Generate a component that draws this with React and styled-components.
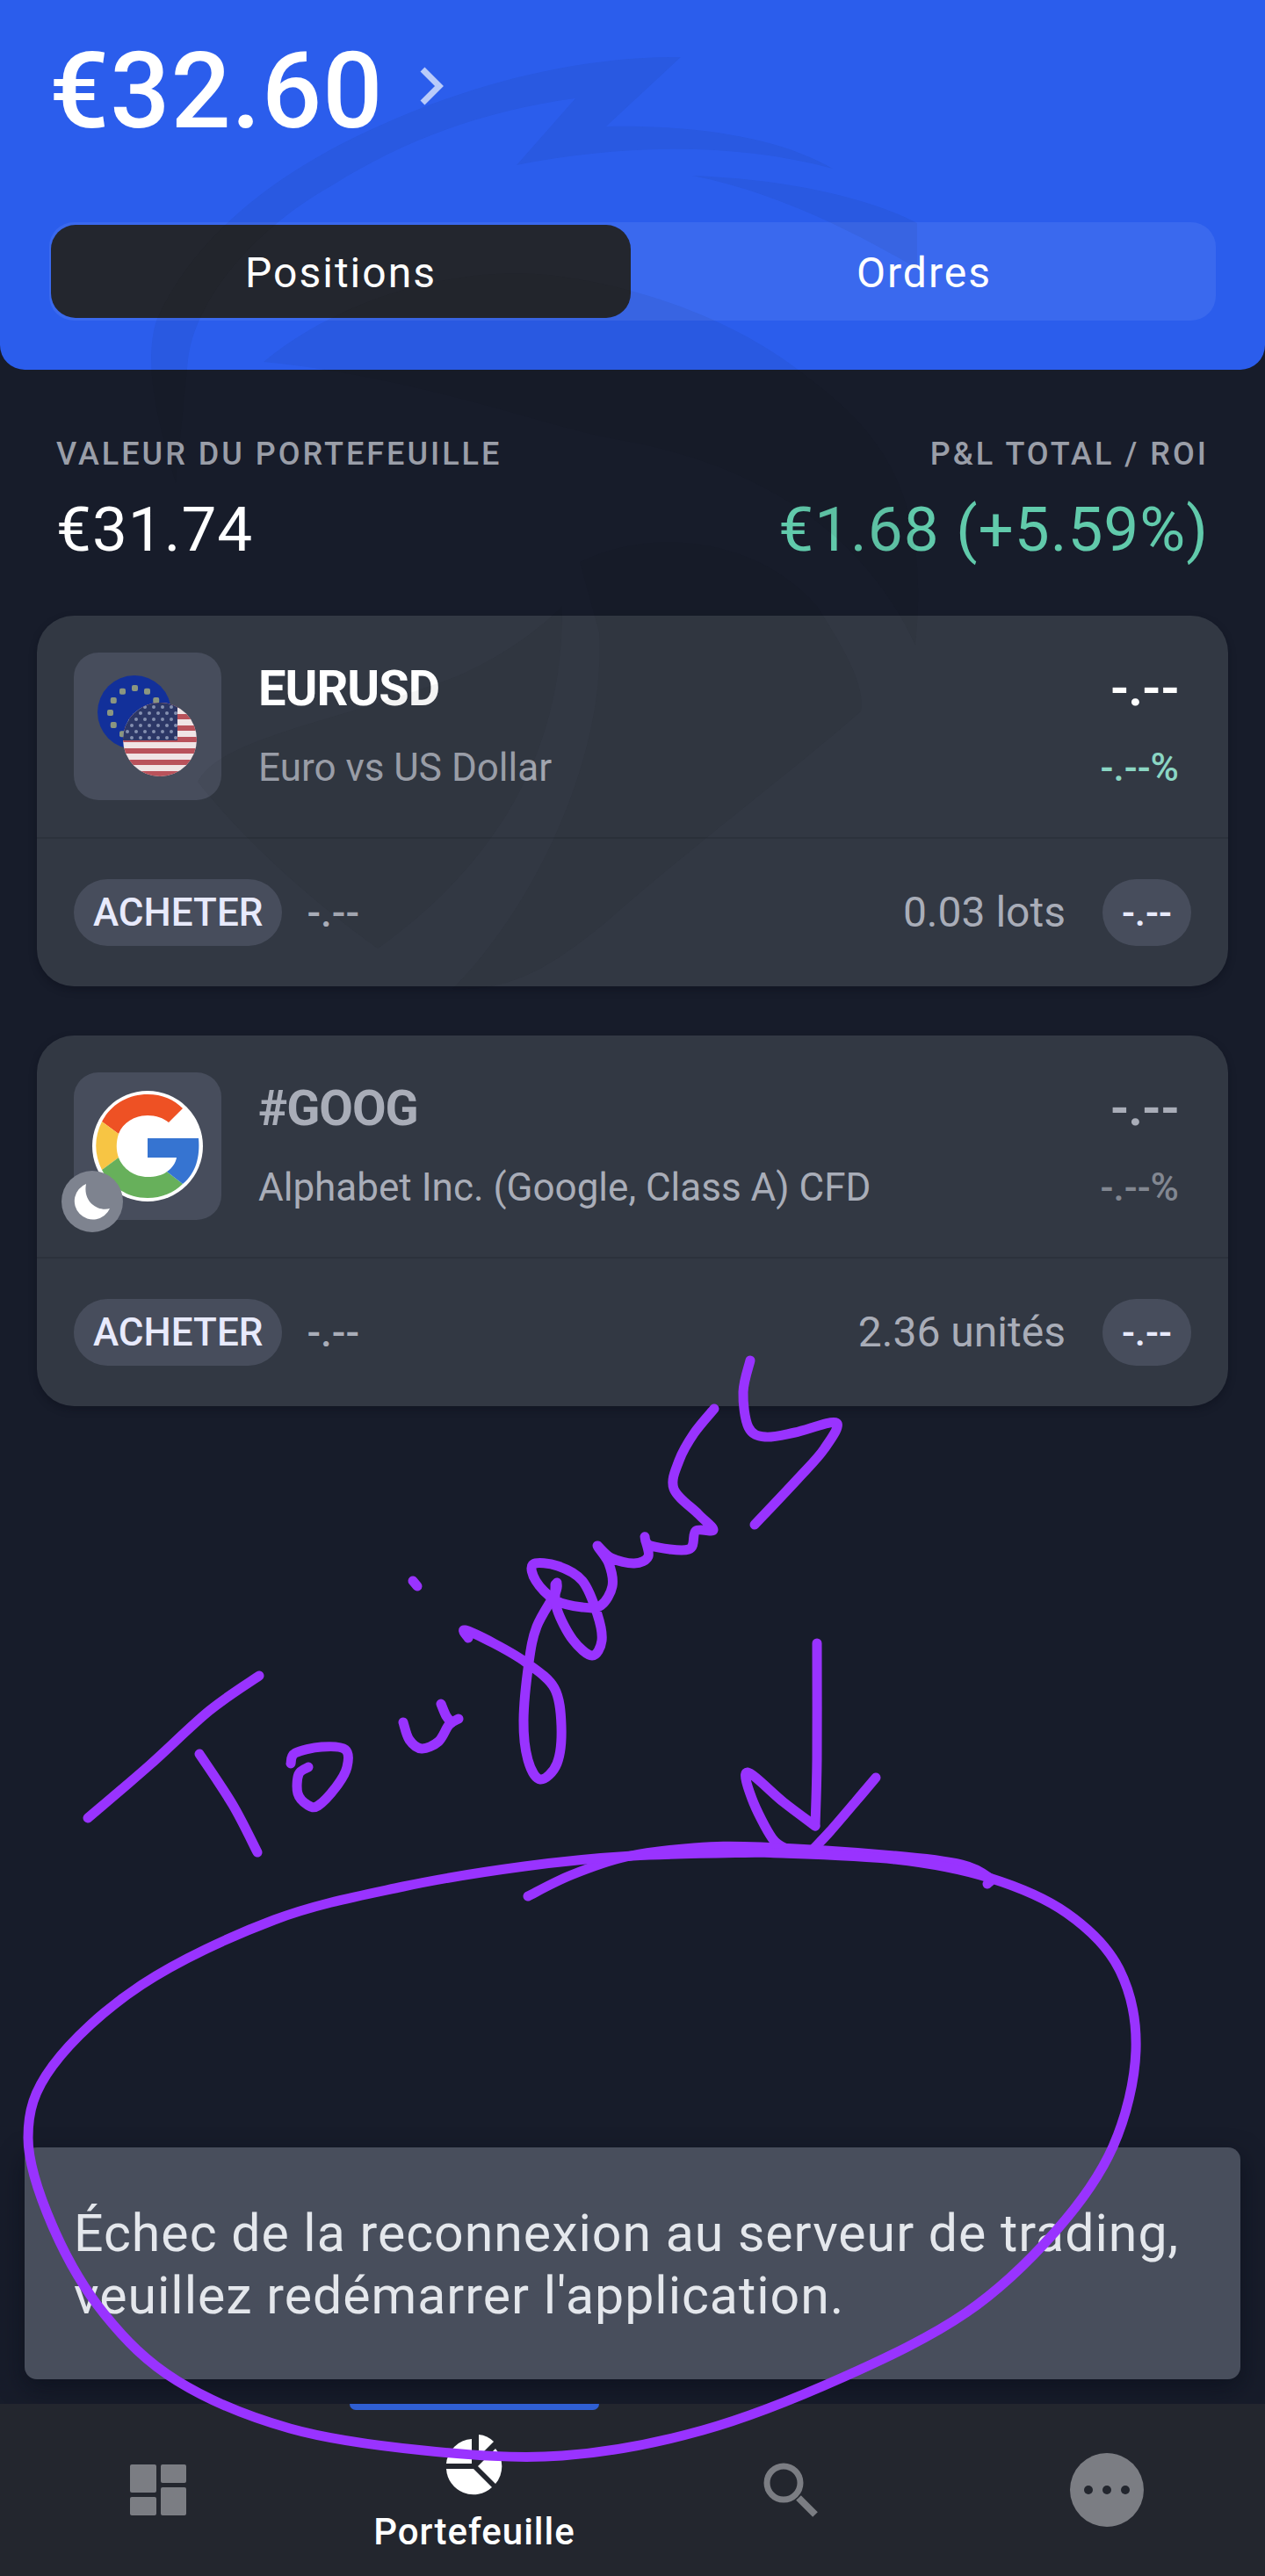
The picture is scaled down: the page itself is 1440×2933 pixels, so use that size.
import React, { useState } from "react";
import styled, { createGlobalStyle } from "styled-components";

const GlobalStyle = createGlobalStyle`
  *, *::before, *::after { box-sizing: border-box; }
  html, body { margin: 0; padding: 0; background: #171c2a; }
  body { font-family: Roboto, "Liberation Sans", sans-serif; color: #fff; }
  button { font: inherit; color: inherit; background: none; border: 0; padding: 0; cursor: pointer; }
  a { color: inherit; text-decoration: none; }
  h1, h2, p, dl, dt, dd, ul { margin: 0; padding: 0; }
`;

const Page = styled.div`
  position: relative;
  display: flex;
  flex-direction: column;
  min-height: 100vh;
  background: #171c2a;
`;

const Header = styled.header`
  padding: 34px 56px 56px;
  border-radius: 0 0 28px 28px;
  background: #2b5dec;
`;

const Balance = styled.button`
  display: flex;
  align-items: center;
  gap: 42px;
  font-size: 120px;
  font-weight: 500;
  line-height: 140px;
  letter-spacing: 1px;
`;

const Chevron = styled.svg`
  width: 28px;
  height: 44px;
  margin-bottom: 12px;
`;

const Tabs = styled.div`
  display: grid;
  grid-template-columns: 1fr 1fr;
  gap: 4px;
  margin-top: 79px;
  padding: 3px 2px;
  border-radius: 28px;
  background: #3a69ee;
`;

const Tab = styled.button`
  height: 106px;
  && { padding-top: 4px; }
  border-radius: 28px;
  font-size: 48px;
  line-height: 56px;
  letter-spacing: 2px;
  background: ${(p) => (p.$active ? "#23262e" : "transparent")};
`;

const Main = styled.main`
  flex: 1;
`;

const Summary = styled.dl`
  display: flex;
  justify-content: space-between;
  && { padding: 74px 64px 56px; }
`;

const SummaryItem = styled.div`
  text-align: ${(p) => (p.$end ? "right" : "left")};
`;

const SummaryLabel = styled.dt`
  font-size: 36px;
  font-weight: 500;
  line-height: 44px;
  letter-spacing: 3px;
  color: #9a9ea8;
`;

const SummaryValue = styled.dd`
  && { margin-top: 22px; }
  font-size: 71px;
  line-height: 84px;
  letter-spacing: 1px;
  color: ${(p) => (p.$gain ? "#61caab" : "#fff")};
`;

const Positions = styled.ul`
  display: flex;
  flex-direction: column;
  gap: 56px;
  && { padding: 0 42px; }
  list-style: none;
`;

const Card = styled.li`
  border-radius: 42px;
  background: #323843;
  box-shadow: 0 4px 8px rgba(8, 12, 24, 0.35);
`;

const CardTop = styled.div`
  display: flex;
  gap: 42px;
  padding: 42px 56px 42px 42px;
  border-bottom: 2px solid #2c323c;
`;

const Tile = styled.div`
  position: relative;
  display: grid;
  place-items: center;
  width: 168px;
  height: 168px;
  border-radius: 28px;
  background: #474d5c;
`;

const MoonBadge = styled.span`
  position: absolute;
  left: -14px;
  bottom: -14px;
  width: 70px;
  height: 70px;
`;

const Instrument = styled.div`
  flex-grow: ${(p) => (p.$end ? 0 : 1)};
  display: flex;
  flex-direction: column;
  gap: 32px;
  padding-top: 9px;
  text-align: ${(p) => (p.$end ? "right" : "left")};
  white-space: nowrap;
`;

const Symbol = styled.h2`
  font-size: 56px;
  font-weight: 700;
  line-height: 64px;
  letter-spacing: -1px;
  color: ${(p) => (p.$muted ? "#a9adb8" : "#fff")};
`;

const Quote = styled.p`
  font-size: 56px;
  font-weight: 700;
  line-height: 64px;
  letter-spacing: -1px;
  color: ${(p) => (p.$muted ? "#a9adb8" : "#fff")};
`;

const Description = styled.p`
  font-size: 44px;
  line-height: 52px;
  color: ${(p) => (p.$muted ? "#a9adb8" : "#a1a5af")};
`;

const Change = styled.p`
  font-size: 44px;
  line-height: 52px;
  font-weight: 500;
  color: ${(p) => (p.$muted ? "#828791" : "#8bd6c3")};
`;

const CardBottom = styled.div`
  display: flex;
  align-items: center;
  height: 168px;
  padding: 0 42px;
  color: #a9adb8;
`;

const Pill = styled.span`
  padding: 0 22px;
  border-radius: 38px;
  background: #474d5c;
  color: #e8eafc;
  font-size: 44px;
  font-weight: 500;
  line-height: 76px;
`;

const OpenPrice = styled.span`
  margin-left: 28px;
  font-size: 46px;
  line-height: 56px;
  font-weight: 500;
`;

const Volume = styled.span`
  margin: 0 42px 0 auto;
  font-size: 48px;
  line-height: 56px;
`;

const Snackbar = styled.p`
  && { margin: 28px; padding: 62px 56px 60px; }
  border-radius: 14px;
  background: #484e5c;
  box-shadow: 0 10px 28px rgba(6, 10, 22, 0.5);
  color: #e4e7ec;
  font-size: 59px;
  line-height: 71px;
  letter-spacing: 1px;
`;

const Nav = styled.nav`
  display: grid;
  grid-template-columns: repeat(4, 1fr);
  height: 196px;
  background: #23262e;
`;

const NavItem = styled.a`
  position: relative;
  display: flex;
  flex-direction: column;
  align-items: center;
  justify-content: center;
  gap: 16px;
  padding-top: ${(p) => (p.$active ? 10 : 0)}px;
  color: ${(p) => (p.$active ? "#fff" : "#7b7d83")};
  font-size: 42px;
  font-weight: 500;
  line-height: 52px;
  letter-spacing: 1px;

  &::before {
    content: "";
    position: absolute;
    top: 0;
    width: 284px;
    height: 7px;
    border-radius: 0 0 8px 8px;
    background: ${(p) => (p.$active ? "#2f5fd3" : "transparent")};
  }
`;

const Overlay = styled.svg`
  position: absolute;
  top: 0;
  left: 0;
  width: 100%;
  height: auto;
  pointer-events: none;
`;

/* Turns a list of points into a smooth curve (Catmull-Rom). */
function smooth(points) {
  let d = `M${points[0][0]} ${points[0][1]}`;
  for (let i = 0; i < points.length - 1; i++) {
    const a = points[i - 1] || points[i];
    const b = points[i];
    const c = points[i + 1];
    const e = points[i + 2] || c;
    d += `C${b[0] + (c[0] - a[0]) / 6} ${b[1] + (c[1] - a[1]) / 6} ${c[0] - (e[0] - b[0]) / 6} ${c[1] - (e[1] - b[1]) / 6} ${c[0]} ${c[1]}`;
  }
  return d;
}

const inkStrokes = [
  [[100, 2070], [170, 2010], [238, 1948], [295, 1908]],
  [[227, 1997], [265, 2055], [293, 2109]],
  [[351, 2012], [340, 2020], [339, 2042], [350, 2055], [362, 2056], [383, 2034], [395, 2012], [393, 1992], [366, 1989], [336, 1996], [331, 2008]],
  [[459, 1961], [466, 1981], [480, 1991], [499, 1983], [511, 1964], [522, 1957]],
  [[502, 1940], [508, 1954], [514, 1961]],
  [[470, 1800], [475, 1806]],
  [[533, 1865], [529, 1856], [562, 1871], [599, 1893], [631, 1922], [639, 1965], [634, 2008], [615, 2026], [601, 2004], [596, 1959], [602, 1893], [611, 1852], [632, 1814], [634, 1802]],
  [[632, 1804], [634, 1832], [652, 1867], [674, 1885], [685, 1868], [680, 1838], [663, 1800], [635, 1783], [607, 1781], [610, 1800], [632, 1822], [663, 1830], [684, 1828], [697, 1806], [693, 1780], [680, 1760], [696, 1774], [722, 1780], [738, 1772], [734, 1750], [741, 1760], [784, 1764], [792, 1743], [812, 1742], [795, 1724], [767, 1695], [773, 1663], [790, 1632], [813, 1604]],
  [[854, 1549], [846, 1585], [852, 1625], [871, 1636], [905, 1631], [952, 1620], [938, 1650], [908, 1684], [859, 1736]],
  [[930, 1871], [930, 2003], [928, 2079]],
  [[928, 2079], [892, 2052], [851, 2018], [856, 2048], [879, 2093], [897, 2106]],
  [[927, 2104], [945, 2085], [975, 2050], [997, 2024]],
  [[601, 2159], [650, 2135], [713, 2114], [790, 2104], [866, 2103], [1019, 2113], [1095, 2123], [1126, 2138], [1124, 2145]],
  [[866, 2109], [1019, 2117], [1126, 2138], [1214, 2178], [1274, 2242], [1293, 2335], [1267, 2444], [1202, 2540], [1100, 2633], [959, 2707], [800, 2767], [640, 2796], [482, 2790], [330, 2765], [202, 2711], [119, 2635], [60, 2535], [32, 2434], [60, 2352], [161, 2260], [312, 2186], [459, 2148], [597, 2125], [720, 2113], [866, 2109]],
];

function Watermark() {
  return (
    <Overlay viewBox="0 0 1440 1140" aria-hidden="true">
      <g fill="#10151c" fillOpacity="0.05">
        <path d="M775 65C660 64 540 94 430 144C300 202 215 280 178 365C164 410 176 470 200 550L214 410C222 340 290 260 380 210C460 160 550 126 655 112L588 188C700 166 830 160 948 192C890 158 800 142 690 144Z" />
        <path d="M788 200C900 204 990 226 1044 254V306C970 262 880 218 788 200Z" />
        <path d="M300 412C400 330 540 300 640 315C760 332 860 380 920 430C1000 490 1060 560 1042 735C990 620 880 530 700 500C620 486 480 430 300 412Z" />
        <path d="M225 890C250 840 390 820 520 770C570 748 610 720 640 690C642 850 570 980 430 1080C360 1030 280 960 225 890Z" />
        <path d="M660 640C740 600 860 610 930 690C962 740 985 780 980 810C900 880 780 970 690 1050C640 1090 590 1130 515 1126C610 1030 690 860 682 720Z" />
      </g>
    </Overlay>
  );
}

function Annotation() {
  return (
    <Overlay viewBox="0 0 1440 2933" aria-hidden="true">
      <g fill="none" stroke="#9933ff" strokeWidth="11" strokeLinecap="round" strokeLinejoin="round">
        {inkStrokes.map((points, i) => (
          <path key={i} d={smooth(points)} />
        ))}
      </g>
    </Overlay>
  );
}

function FlagPair() {
  const euStars = Array.from({ length: 12 }, (_, i) => {
    const t = (i * Math.PI) / 6;
    return [42 + 28 * Math.sin(t), 42 - 28 * Math.cos(t)];
  });
  const usStars = [];
  for (let r = 0; r < 6; r++) {
    for (let c = 0; c < 6; c++) usStars.push([34 + c * 10 + (r % 2) * 5, 36 + r * 7]);
  }
  return (
    <svg width="114" height="116" viewBox="0 0 114 116" aria-hidden="true">
      <defs>
        <clipPath id="usDisc"><circle cx="71" cy="73" r="42" /></clipPath>
      </defs>
      <circle cx="42" cy="42" r="42" fill="#12309a" />
      {euStars.map(([x, y], i) => (
        <rect key={i} x={x - 3} y={y - 3} width="7" height="7" rx="2" fill="#8b9680" />
      ))}
      <g clipPath="url(#usDisc)">
        <rect x="28" y="30" width="88" height="88" fill="#f0e4e5" />
        {[0, 1, 2, 3, 4, 5, 6].map((i) => (
          <rect key={i} x="28" y={31 + i * 13} width="88" height="6" fill="#b9525b" />
        ))}
        <rect x="28" y="30" width="63" height="44" fill="#2c3766" />
        {usStars.map(([x, y], i) => (
          <circle key={i} cx={x} cy={y} r="2" fill="#8590b0" />
        ))}
      </g>
    </svg>
  );
}

function GoogleLogo() {
  return (
    <svg width="126" height="126" viewBox="0 0 126 126" aria-hidden="true">
      <circle cx="63" cy="63" r="63" fill="#fff" />
      <path fill="#ee5124" d="M63 4C80 4 93 10 103 20L87 36C81 31 73 28 63 28C48 28 35 36 30 49L11 35C21 16 40 4 63 4Z" />
      <path fill="#f7c544" d="M11 35L30 49C27 58 27 68 30 76L11 90C2 72 2 53 11 35Z" />
      <path fill="#67b05b" d="M11 90L30 76C35 89 48 98 63 98C72 98 80 96 85 92L103 106C93 116 79 122 63 122C40 122 21 109 11 90Z" />
      <path fill="#3674d1" d="M63 54H121C123 75 118 94 103 106L85 92C91 88 95 82 96 76H63Z" />
    </svg>
  );
}

function MoonIcon() {
  return (
    <svg width="70" height="70" viewBox="0 0 70 70" aria-hidden="true">
      <circle cx="35" cy="35" r="35" fill="#7e838f" />
      <path fill="#fff" d="M28 15A21 21 0 1 0 55 43C42 47 24 36 28 15Z" />
    </svg>
  );
}

function DashboardIcon() {
  return (
    <svg width="64" height="58" viewBox="0 0 64 58" fill="currentColor" aria-hidden="true">
      <rect width="30" height="32" rx="2" />
      <rect x="35" width="29" height="21" rx="2" />
      <rect y="37" width="30" height="21" rx="2" />
      <rect x="35" y="26" width="29" height="32" rx="2" />
    </svg>
  );
}

function PieIcon() {
  return (
    <svg width="64" height="70" viewBox="0 0 64 70" fill="currentColor" aria-hidden="true">
      <path d="M29 6V34H0A31 31 0 0 1 29 6Z" />
      <path d="M0 40H31L52 61A31 31 0 0 1 0 40Z" />
      <path d="M36 37L56 17A31 31 0 0 1 56 57Z" />
      <path d="M37 1A28 28 0 0 1 54 9L37 26Z" />
    </svg>
  );
}

function SearchIcon() {
  return (
    <svg width="62" height="62" viewBox="0 0 62 62" fill="none" stroke="currentColor" aria-hidden="true">
      <circle cx="23" cy="23" r="19" strokeWidth="7" />
      <path d="M40 40L59 59" strokeWidth="8" />
    </svg>
  );
}

function MoreIcon() {
  return (
    <svg width="84" height="84" viewBox="0 0 84 84" aria-hidden="true">
      <circle cx="42" cy="42" r="42" fill="currentColor" />
      <g fill="#23262e">
        <circle cx="21" cy="42" r="5" />
        <circle cx="42" cy="42" r="5" />
        <circle cx="63" cy="42" r="5" />
      </g>
    </svg>
  );
}

const positions = [
  { symbol: "EURUSD", name: "Euro vs US Dollar", volume: "0.03 lots", logo: <FlagPair /> },
  { symbol: "#GOOG", name: "Alphabet Inc. (Google, Class A) CFD", volume: "2.36 unités", logo: <GoogleLogo />, closed: true },
];

function PositionCard({ symbol, name, volume, logo, closed }) {
  return (
    <Card>
      <CardTop>
        <Tile>
          {logo}
          {closed && <MoonBadge><MoonIcon /></MoonBadge>}
        </Tile>
        <Instrument>
          <Symbol $muted={closed}>{symbol}</Symbol>
          <Description $muted={closed}>{name}</Description>
        </Instrument>
        <Instrument $end>
          <Quote $muted={closed}>-.--</Quote>
          <Change $muted={closed}>-.--%</Change>
        </Instrument>
      </CardTop>
      <CardBottom>
        <Pill>ACHETER</Pill>
        <OpenPrice>-.--</OpenPrice>
        <Volume>{volume}</Volume>
        <Pill>-.--</Pill>
      </CardBottom>
    </Card>
  );
}

export default function App() {
  const [tab, setTab] = useState("Positions");
  return (
    <Page>
      <GlobalStyle />
      <Header>
        <Balance type="button">
          €32.60
          <Chevron viewBox="0 0 28 44" fill="none" stroke="#b9cbfa" strokeWidth="7" aria-hidden="true">
            <path d="M3 3L22 22L3 41" />
          </Chevron>
        </Balance>
        <Tabs role="tablist">
          {["Positions", "Ordres"].map((name) => (
            <Tab key={name} type="button" role="tab" aria-selected={tab === name} $active={tab === name} onClick={() => setTab(name)}>
              {name}
            </Tab>
          ))}
        </Tabs>
      </Header>
      <Main>
        <Summary>
          <SummaryItem>
            <SummaryLabel>VALEUR DU PORTEFEUILLE</SummaryLabel>
            <SummaryValue>€31.74</SummaryValue>
          </SummaryItem>
          <SummaryItem $end>
            <SummaryLabel>P&amp;L TOTAL / ROI</SummaryLabel>
            <SummaryValue $gain>€1.68 (+5.59%)</SummaryValue>
          </SummaryItem>
        </Summary>
        <Positions>
          {positions.map((p) => (
            <PositionCard key={p.symbol} {...p} />
          ))}
        </Positions>
      </Main>
      <Snackbar role="status">Échec de la reconnexion au serveur de trading, veuillez redémarrer l'application.</Snackbar>
      <Nav>
        <NavItem href="#accueil" aria-label="Accueil"><DashboardIcon /></NavItem>
        <NavItem href="#portefeuille" $active aria-current="page"><PieIcon />Portefeuille</NavItem>
        <NavItem href="#recherche" aria-label="Recherche"><SearchIcon /></NavItem>
        <NavItem href="#plus" aria-label="Plus"><MoreIcon /></NavItem>
      </Nav>
      <Watermark />
      <Annotation />
    </Page>
  );
}
